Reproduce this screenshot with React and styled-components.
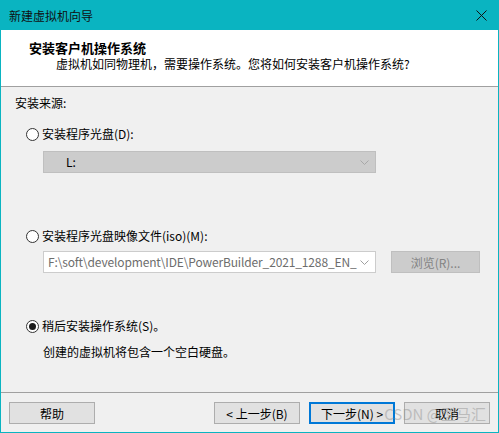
import React from "react";
import styled, { createGlobalStyle } from "styled-components";

const Global = createGlobalStyle`
  html, body { margin: 0; padding: 0; background: #ffffff; }
  body { font-family: "Noto Sans CJK SC", "Noto Sans", sans-serif; font-size: 12px; color: #000; }
  * { box-sizing: border-box; }
`;

const Window = styled.div`
  width: 499px;
  height: 433px;
  background: #0ab4c1;
  padding: 0 1px 1px 1px;
  display: flex;
  flex-direction: column;
`;

const TitleBar = styled.div`
  height: 30px;
  flex: none;
  display: flex;
  align-items: center;
  justify-content: space-between;
  padding: 0 11px 0 8px;
  color: #101010;
  font-size: 12px;
`;

const Header = styled.div`
  height: 57px;
  flex: none;
  background: #ffffff;
  border-bottom: 1px solid #a0a0a0;
  padding: 10px 0 0 28px;
  display: flex;
  flex-direction: column;
`;

const Heading = styled.div`
  font-weight: bold;
  font-size: 13px;
  line-height: 16px;
`;

const SubTitle = styled.div`
  line-height: 16px;
  margin: 0 0 0 27px;
`;

const Body = styled.div`
  flex: 1;
  background: #f0f0f0;
  padding: 8px 0 0 14px;
  display: flex;
  flex-direction: column;
`;

const Line = styled.div`
  line-height: 16px;
  height: 16px;
  margin-top: ${(p) => p.$mt || 0}px;
  margin-left: ${(p) => p.$ml || 0}px;
  white-space: nowrap;
`;

const RadioRow = styled.label`
  display: flex;
  align-items: center;
  gap: 3px;
  height: 16px;
  line-height: 16px;
  margin-top: ${(p) => p.$mt}px;
  margin-left: 11px;
  white-space: nowrap;
`;

const RadioCircle = styled.span`
  width: 13px;
  height: 13px;
  border-radius: 50%;
  border: 1px solid #333333;
  background: #ffffff;
  display: flex;
  align-items: center;
  justify-content: center;
  &::after {
    content: "";
    width: 7px;
    height: 7px;
    border-radius: 50%;
    background: ${(p) => (p.$checked ? "#1a1a1a" : "transparent")};
  }
`;

const FieldRow = styled.div`
  display: flex;
  align-items: center;
  gap: 15px;
  margin-top: ${(p) => p.$mt}px;
  margin-left: 28px;
`;

const Select = styled.div`
  width: 333px;
  height: 22px;
  border: 1px solid ${(p) => (p.$disabled ? "#bfbfbf" : "#cccccc")};
  background: ${(p) => (p.$disabled ? "#cccccc" : "#ffffff")};
  display: flex;
  align-items: center;
  gap: 4px;
  padding: 0 6px 0 ${(p) => p.$pl}px;
  color: ${(p) => (p.$disabled ? "#000000" : "#6d6d6d")};
`;

const SelectText = styled.span`
  flex: 1;
  min-width: 0;
  white-space: nowrap;
  line-height: 16px;
  letter-spacing: -0.14px;
`;

const BrowseButton = styled.div`
  width: 89px;
  height: 22px;
  background: #cccccc;
  border: 1px solid #bfbfbf;
  color: #838383;
  display: flex;
  align-items: center;
  justify-content: center;
`;

const Footer = styled.div`
  flex: none;
  background: #f0f0f0;
  border-top: 1px solid #a0a0a0;
  padding: 9px 8px 8px 8px;
  display: flex;
  align-items: center;
  position: relative;
`;

const Spacer = styled.div`
  flex: 1;
`;

const Button = styled.div`
  width: 86px;
  height: 22px;
  background: #e1e1e1;
  border: ${(p) => (p.$primary ? "2px solid #0078d7" : "1px solid #adadad")};
  display: flex;
  align-items: center;
  justify-content: center;
  margin-left: ${(p) => p.$ml || 0}px;
  color: #000;
  white-space: nowrap;
`;

const Watermark = styled.div`
  position: absolute;
  right: 12px;
  top: 10px;
  font-size: 15px;
  color: rgba(150, 150, 150, 0.5);
  white-space: nowrap;
  pointer-events: none;
`;

const Chevron = ({ color }) => (
  <svg width="9" height="5" viewBox="0 0 9 5">
    <path d="M0.5 0.5 L4.5 4.5 L8.5 0.5" fill="none" stroke={color} strokeWidth="1" />
  </svg>
);

const CloseIcon = () => (
  <svg width="11" height="11" viewBox="0 0 11 11">
    <path d="M0.5 0.5 L10.5 10.5 M10.5 0.5 L0.5 10.5" stroke="#111" strokeWidth="1" />
  </svg>
);

export default function App() {
  return (
    <>
      <Global />
      <Window>
        <TitleBar>
          <span>新建虚拟机向导</span>
          <CloseIcon />
        </TitleBar>
        <Header>
          <Heading>安装客户机操作系统</Heading>
          <SubTitle>虚拟机如同物理机，需要操作系统。您将如何安装客户机操作系统?</SubTitle>
        </Header>
        <Body>
          <Line>安装来源:</Line>
          <RadioRow $mt={15}>
            <RadioCircle />
            安装程序光盘(D):
          </RadioRow>
          <FieldRow $mt={9}>
            <Select $disabled $pl={22}>
              <SelectText>L:</SelectText>
              <Chevron color="#a8a8a8" />
            </Select>
          </FieldRow>
          <RadioRow $mt={55}>
            <RadioCircle />
            安装程序光盘映像文件(iso)(M):
          </RadioRow>
          <FieldRow $mt={7}>
            <Select $pl={4}>
              <SelectText>F:\soft\development\IDE\PowerBuilder_2021_1288_EN_</SelectText>
              <Chevron color="#a0a0a0" />
            </Select>
            <BrowseButton>浏览(R)...</BrowseButton>
          </FieldRow>
          <RadioRow $mt={45}>
            <RadioCircle $checked />
            稍后安装操作系统(S)。
          </RadioRow>
          <Line $mt={10} $ml={28}>创建的虚拟机将包含一个空白硬盘。</Line>
        </Body>
        <Footer>
          <Button>帮助</Button>
          <Spacer />
          <Button>&lt; 上一步(B)</Button>
          <Button $primary $ml={9}>下一步(N) &gt;</Button>
          <Button $ml={9}>取消</Button>
          <Watermark>CSDN @型马汇</Watermark>
        </Footer>
      </Window>
    </>
  );
}
